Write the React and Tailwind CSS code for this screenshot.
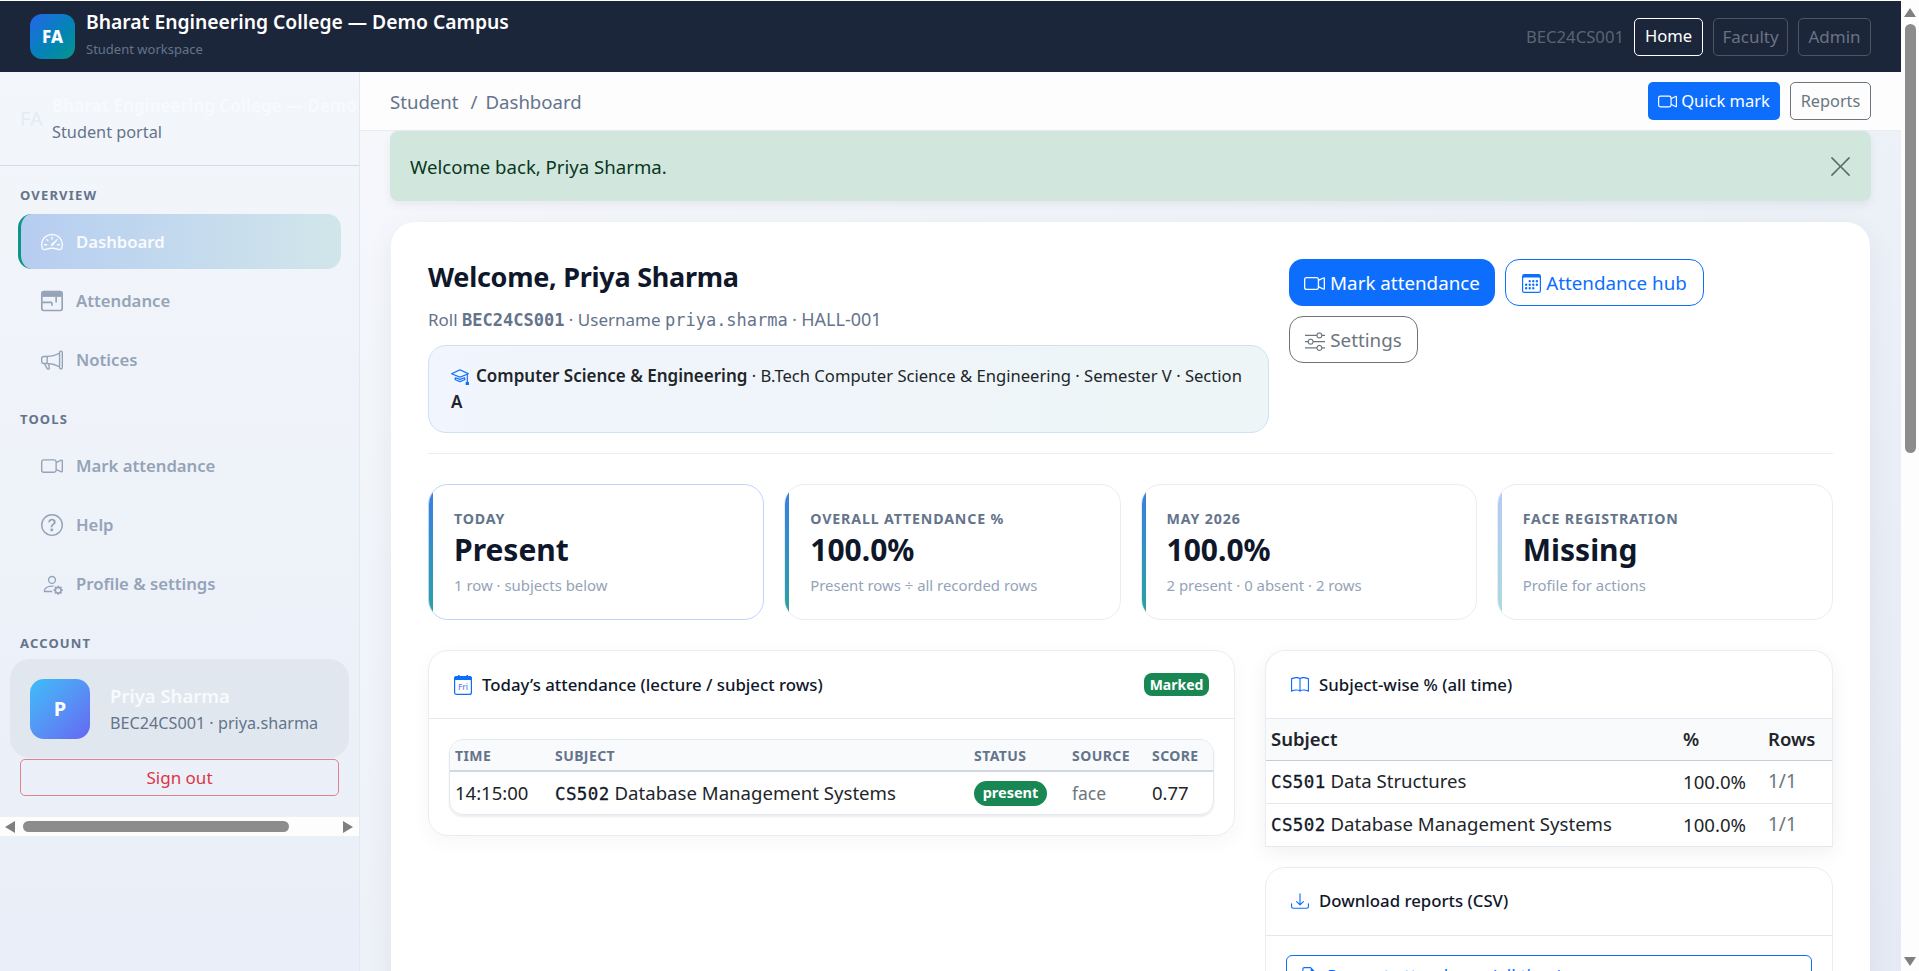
import {
  BsSpeedometer2,
  BsMegaphone,
  BsCameraVideo,
  BsQuestionCircle,
  BsPersonGear,
  BsCalendar3,
  BsSliders,
  BsMortarboard,
  BsBook,
  BsDownload,
  BsXLg,
  BsFileEarmarkText,
} from "react-icons/bs";

const navCls = "flex h-[55px] items-center gap-[13px] pl-[23px] text-[16.7px] font-semibold text-[#94a3b8]";
const labelCls = "h-4 px-5 text-[13px] leading-4 font-bold tracking-[0.09em] text-[#64748b]";
const monoCls = "font-['DejaVu_Sans_Mono','Liberation_Mono',monospace]";
const codeCls = "text-[17.5px] tracking-[0.4px] text-[#111827] [-webkit-text-stroke:0.3px]";

function FriIcon() {
  return (
    <svg width="18" height="20" viewBox="0 0 18 20" className="shrink-0">
      <rect x="0.6" y="1.6" width="16.8" height="17.8" rx="2" fill="#fff" stroke="#0d6efd" strokeWidth="1.2" />
      <path d="M2.5 1h13A2.5 2.5 0 0 1 18 3.5V5H0V3.5A2.5 2.5 0 0 1 2.5 1z" fill="#0d6efd" />
      <rect x="4" y="0" width="1.6" height="2.5" fill="#0d6efd" />
      <rect x="12.4" y="0" width="1.6" height="2.5" fill="#0d6efd" />
      <text x="9" y="14.5" textAnchor="middle" fontSize="8" fontFamily="Noto Sans, sans-serif" fontWeight="600" fill="#7c8cf0">Fri</text>
    </svg>
  );
}

function WindowIcon({ className }) {
  return (
    <svg viewBox="0 0 16 16" fill="none" className={className}>
      <rect x="0.6" y="1.1" width="14.8" height="13.8" rx="1.4" stroke="currentColor" strokeWidth="1.2" />
      <rect x="1" y="1.5" width="14" height="3.5" fill="currentColor" />
      <path d="M1 9h7M8 9v2.5M11 5v4" stroke="currentColor" strokeWidth="1.2" />
    </svg>
  );
}

function NavItem({ icon: Icon, label }) {
  return (
    <a className={navCls}>
      <Icon className="h-[22px] w-[22px] shrink-0" />
      <span>{label}</span>
    </a>
  );
}

function Stat({ label, value, sub, light, active }) {
  return (
    <div className={`flex h-[136px] overflow-hidden rounded-[20px] border bg-white ${active ? "border-[#bfd5f7]" : "border-[#e9edf2]"}`}>
      <div className={`w-1 shrink-0 bg-gradient-to-b ${light ? "from-[#b5cbf5] to-[#a9dadb]" : "from-[#3b7be8] to-[#2ba39b]"}`} />
      <div className="pl-[21px] pt-[25px]">
        <div className="text-[14.2px] leading-[17px] font-bold tracking-[0.06em] text-[#64748b]">{label}</div>
        <div className="mt-[3px] text-[30px] leading-[40px] font-bold text-[#0f172a]">{value}</div>
        <div className="mt-[5px] text-[14.9px] leading-[20px] text-[#94a3b8]">{sub}</div>
      </div>
    </div>
  );
}

function CardHead({ icon, title, children }) {
  return (
    <div className="flex h-[68px] items-center gap-[10px] border-b border-[#e2e8f0] pl-[25px] pr-[25px]">
      {icon}
      <span className="text-[16.8px] font-medium text-[#0f172a]">{title}</span>
      {children}
    </div>
  );
}

function SubjectRow({ code, name, border }) {
  return (
    <tr className={`h-[43px] ${border ? "border-b border-[#e2e8f0]" : ""}`}>
      <td className="pl-[5px] text-[18.6px] text-[#212529]">
        <span className={`${monoCls} ${codeCls}`}>{code}</span> {name}
      </td>
      <td className="text-[18.6px] text-[#212529]">100.0%</td>
      <td className="text-[19px] text-[#6c757d]">1/1</td>
    </tr>
  );
}

export default function App() {
  return (
    <div className="flex h-[971px] w-full overflow-hidden bg-white font-['Noto_Sans',sans-serif]">
      <div className="flex w-[1901px] shrink-0 flex-col pt-px">
        {/* top bar */}
        <header className="flex h-[71px] shrink-0 items-center bg-[#1c263a] pl-[30px] pr-[30px]">
          <div className="flex h-[45px] w-[45px] items-center justify-center rounded-[12px] bg-gradient-to-br from-[#2563eb] to-[#0d9488] text-[17px] font-extrabold text-white">
            FA
          </div>
          <div className="ml-[11px] pb-2">
            <div className="text-[19.3px] leading-[26px] font-semibold text-white">Bharat Engineering College — Demo Campus</div>
            <div className="mt-[6px] text-[13px] leading-[16px] text-[#64748b]">Student workspace</div>
          </div>
          <div className="ml-auto flex items-center gap-[10px]">
            <span className="text-[16.7px] text-[#5b6474]">BEC24CS001</span>
            <a className="flex h-[38px] w-[69px] items-center justify-center rounded-[5px] border border-white text-[16.6px] text-white">Home</a>
            <a className="flex h-[38px] w-[75px] items-center justify-center rounded-[5px] border border-[#4b5563] text-[17px] text-[#6b7280]">Faculty</a>
            <a className="flex h-[38px] w-[73px] items-center justify-center rounded-[5px] border border-[#4b5563] text-[17px] text-[#6b7280]">Admin</a>
          </div>
        </header>

        <div className="flex min-h-0 flex-1">
          {/* sidebar */}
          <aside className="flex w-[360px] shrink-0 flex-col border-r border-[#e2e8f0] bg-gradient-to-b from-[#f3f6fa] to-[#e9eef8]">
            <div className="flex h-[94px] shrink-0 items-center overflow-hidden border-b border-[#d5dbe5] pl-5">
              <span className="w-8 shrink-0 text-[20px] text-[#e6ebf3]">FA</span>
              <div className="whitespace-nowrap">
                <div className="text-[16.9px] leading-[26px] font-bold text-[#f8fafc]">Bharat Engineering College — Demo Campus</div>
                <div className="text-[16.3px] leading-[26px] text-[#64748b]">Student portal</div>
              </div>
            </div>
            <div className={`mt-[21px] ${labelCls}`}>OVERVIEW</div>
            <nav className="mt-[11px] flex flex-col gap-1 pl-[18px] pr-[18px]">
              <a className="flex h-[55px] items-center gap-[13px] rounded-[14px] border-l-[3px] border-[#0d9488] bg-gradient-to-r from-[#b6cdf1] to-[#d1e6ea] pl-5 text-[16.7px] font-semibold text-[#f8fafc]">
                <BsSpeedometer2 className="h-[22px] w-[22px] shrink-0" />
                <span>Dashboard</span>
              </a>
              <NavItem icon={WindowIcon} label="Attendance" />
              <NavItem icon={BsMegaphone} label="Notices" />
            </nav>
            <div className={`mt-6 ${labelCls}`}>TOOLS</div>
            <nav className="mt-[11px] flex flex-col gap-1 pl-[18px] pr-[18px]">
              <NavItem icon={BsCameraVideo} label="Mark attendance" />
              <NavItem icon={BsQuestionCircle} label="Help" />
              <NavItem icon={BsPersonGear} label="Profile & settings" />
            </nav>
            <div className={`mt-6 ${labelCls}`}>ACCOUNT</div>
            <div className="mx-[10px] mt-2 flex h-[99px] items-center gap-5 rounded-[20px] bg-[#e1e7ef] pl-5">
              <div className="flex h-[60px] w-[60px] shrink-0 items-center justify-center rounded-[14px] bg-gradient-to-br from-[#38bdf8] to-[#6366f1] text-[20px] font-bold text-white">P</div>
              <div>
                <div className="text-[18.5px] leading-[27px] font-semibold text-[#f8fafc]">Priya Sharma</div>
                <div className="mt-px text-[16.2px] leading-[26px] text-[#64748b]">BEC24CS001 · priya.sharma</div>
              </div>
            </div>
            <a className="mx-5 mt-px flex h-[37px] items-center justify-center rounded-[5px] border border-[#e0818b] text-[17px] text-[#dc3545]">Sign out</a>
            <div className="mt-[21px] flex h-[19px] shrink-0 items-center bg-[#fdfdfe] pl-[5px] pr-[6px]">
              <span className="h-0 w-0 border-y-[6px] border-r-[10px] border-y-transparent border-r-[#7f7f7f]" />
              <span className="ml-2 h-[11px] w-[266px] rounded-full bg-[#8c8c8c]" />
              <span className="ml-auto h-0 w-0 border-y-[6px] border-l-[10px] border-y-transparent border-l-[#7f7f7f]" />
            </div>
          </aside>

          {/* main */}
          <main className="flex min-w-0 flex-1 flex-col overflow-hidden bg-gradient-to-br from-[#f6f8fc] to-[#e5eaf4]">
            <div className="flex h-[59px] shrink-0 items-center border-b border-[#e9edf3] bg-[#fdfdfe] pl-[30px] pr-[30px]">
              <span className="pt-px text-[18.6px] text-[#64748b]">Student</span>
              <span className="ml-3 mr-2 pt-px text-[18.6px] text-[#64748b]">/</span>
              <span className="pt-px text-[18.6px] text-[#64748b]">Dashboard</span>
              <div className="ml-auto flex gap-[10px]">
                <a className="flex h-[38px] w-[132px] items-center justify-center gap-1 rounded-[5px] bg-[#0d6efd] text-[16.5px] text-white">
                  <BsCameraVideo className="h-[19px] w-[19px]" />
                  Quick mark
                </a>
                <a className="flex h-[38px] w-[81px] items-center justify-center rounded-[5px] border border-[#6c757d] text-[16.3px] text-[#6c757d]">Reports</a>
              </div>
            </div>

            <div className="mx-[30px] flex h-[70px] shrink-0 items-center justify-between rounded-[8px] bg-[#d1e7dd] pl-5 pr-[18px] shadow-[0_4px_10px_rgba(15,23,42,0.06)]">
              <span className="pt-[2px] text-[18.6px] text-[#0a3622]">Welcome back, Priya Sharma.</span>
              <BsXLg className="h-[25px] w-[25px] text-[#5d6a64]" />
            </div>

            <section className="mx-[31px] mt-[21px] rounded-[24px] bg-white pl-[37px] pr-[37px] pt-[37px] shadow-[0_8px_30px_rgba(15,23,42,0.06)]">
              <div className="flex gap-5 border-b border-[#e9edf2] pb-5">
                <div className="w-[841px] shrink-0">
                  <h1 className="text-[27px] leading-9 font-bold tracking-[-0.01em] text-[#0f172a]">Welcome, Priya Sharma</h1>
                  <p className="mt-3 text-[17px] leading-6 text-[#64748b]">
                    Roll <span className={`${monoCls} font-bold`}>BEC24CS001</span> · Username <span className={monoCls}>priya.sharma</span> · <span className="text-[18px]">HALL-001</span>
                  </p>
                  <div className="mt-[13px] h-[88px] rounded-[18px] border border-[#cfe0f7] bg-gradient-to-r from-[#f1f5fd] to-[#edf5f6] pl-[22px] pr-5 pt-[17px] text-[16.6px] leading-[26px] text-[#212529]">
                    <BsMortarboard className="mr-[7px] inline h-[18px] w-[18px] align-[-3px] text-[#0d6efd]" />
                    <b className="text-[17px] font-semibold">Computer Science &amp; Engineering</b> · B.Tech Computer Science &amp; Engineering · Semester V · Section <b className="text-[17px] font-semibold">A</b>
                  </div>
                </div>
                <div className="flex w-[430px] flex-wrap content-start gap-[10px]">
                  <a className="flex h-[47px] w-[206px] items-center justify-center gap-[5px] rounded-[14px] bg-[#0d6efd] pt-[2px] text-[18.8px] text-white">
                    <BsCameraVideo className="h-[21px] w-[21px]" />
                    Mark attendance
                  </a>
                  <a className="flex h-[47px] w-[199px] items-center justify-center gap-[5px] rounded-[14px] border border-[#0d6efd] pt-[2px] text-[18.8px] text-[#0d6efd]">
                    <BsCalendar3 className="h-[19px] w-[19px]" />
                    Attendance hub
                  </a>
                  <a className="flex h-[47px] w-[129px] items-center justify-center gap-[5px] rounded-[14px] border border-[#6c757d] pt-[2px] text-[18.8px] text-[#6c757d]">
                    <BsSliders className="h-5 w-5" />
                    Settings
                  </a>
                </div>
              </div>

              <div className="mt-[30px] grid grid-cols-4 gap-5">
                <Stat active label="TODAY" value="Present" sub="1 row · subjects below" />
                <Stat label="OVERALL ATTENDANCE %" value="100.0%" sub="Present rows ÷ all recorded rows" />
                <Stat label="MAY 2026" value="100.0%" sub="2 present · 0 absent · 2 rows" />
                <Stat light label="FACE REGISTRATION" value="Missing" sub="Profile for actions" />
              </div>

              <div className="mt-[30px] flex items-start gap-[30px]">
                <div className="w-[807px] shrink-0 rounded-[20px] border border-[#e9edf2] bg-white shadow-[0_6px_20px_rgba(15,23,42,0.04)]">
                  <CardHead icon={<FriIcon />} title="Today’s attendance (lecture / subject rows)">
                    <span className="ml-auto flex h-[23px] w-[65px] items-center justify-center rounded-[8px] bg-[#198754] text-[14px] font-bold text-white">Marked</span>
                  </CardHead>
                  <div className="px-5 py-5">
                    <div className="overflow-hidden rounded-[14px] border border-[#e2e8f0] shadow-[0_2px_2px_rgba(15,23,42,0.08)]">
                      <table className="w-full table-fixed">
                        <thead>
                          <tr className="h-[31px] border-b-2 border-[#d3d8e0] bg-[#f8fafc] text-left text-[14px] font-bold tracking-[0.03em] text-[#64748b]">
                            <th className="w-[105px] pl-[5px] font-bold">TIME</th>
                            <th className="w-[419px] font-bold">SUBJECT</th>
                            <th className="w-[98px] font-bold">STATUS</th>
                            <th className="w-[80px] font-bold">SOURCE</th>
                            <th className="font-bold">SCORE</th>
                          </tr>
                        </thead>
                        <tbody>
                          <tr className="h-[43px]">
                            <td className="pl-[5px] text-[18.5px] text-[#212529]">14:15:00</td>
                            <td className="text-[18.6px] text-[#212529]">
                              <span className={`${monoCls} ${codeCls}`}>CS502</span> Database Management Systems
                            </td>
                            <td>
                              <span className="flex h-[25px] w-[73px] items-center justify-center rounded-full bg-[#198754] text-[14.5px] font-bold text-white">present</span>
                            </td>
                            <td className="text-[17.5px] text-[#6c757d]">face</td>
                            <td className="text-[18.5px] text-[#212529]">0.77</td>
                          </tr>
                        </tbody>
                      </table>
                    </div>
                  </div>
                </div>

                <div className="flex w-[568px] shrink-0 flex-col gap-5">
                  <div className="overflow-hidden rounded-t-[20px] border-x border-t border-[#e9edf2] bg-white shadow-[0_6px_20px_rgba(15,23,42,0.06)]">
                    <CardHead icon={<BsBook className="h-[18px] w-[18px] text-[#0d6efd]" />} title="Subject-wise % (all time)" />
                    <table className="w-full table-fixed border-b border-[#e2e8f0]">
                      <thead>
                        <tr className="h-[41px] border-b border-[#c9ccd0] bg-[#f8fafc] text-left text-[18.5px] text-[#212529]">
                          <th className="pl-[5px] font-semibold">Subject</th>
                          <th className="w-[85px] font-semibold">%</th>
                          <th className="w-[64px] font-semibold">Rows</th>
                        </tr>
                      </thead>
                      <tbody>
                        <SubjectRow border code="CS501" name="Data Structures" />
                        <SubjectRow code="CS502" name="Database Management Systems" />
                      </tbody>
                    </table>
                  </div>

                  <div className="rounded-[20px] border border-[#e9edf2] bg-white">
                    <CardHead icon={<BsDownload className="h-[18px] w-[18px] text-[#0d6efd]" />} title="Download reports (CSV)" />
                    <div className="px-5 pt-[19px]">
                      <a className="flex h-[43px] items-center gap-[9px] rounded-[6px] border border-[#0d6efd] pl-[13px] text-[17.5px] text-[#0d6efd]">
                        <BsFileEarmarkText className="h-[18px] w-[18px]" />
                        Present attendance (all time)
                      </a>
                    </div>
                  </div>
                </div>
              </div>
            </section>
          </main>
        </div>
      </div>

      {/* page scrollbar */}
      <div className="flex w-[18px] shrink-0 flex-col items-center bg-[#fdfdfd] pt-2 pb-[5px]">
        <span className="h-0 w-0 border-x-[6px] border-b-[9px] border-x-transparent border-b-[#7f7f7f]" />
        <span className="mt-[7px] h-[429px] w-[11px] rounded-full bg-[#8c8c8c]" />
        <span className="mt-auto h-0 w-0 border-x-[6px] border-t-[9px] border-x-transparent border-t-[#7f7f7f]" />
      </div>
    </div>
  );
}
